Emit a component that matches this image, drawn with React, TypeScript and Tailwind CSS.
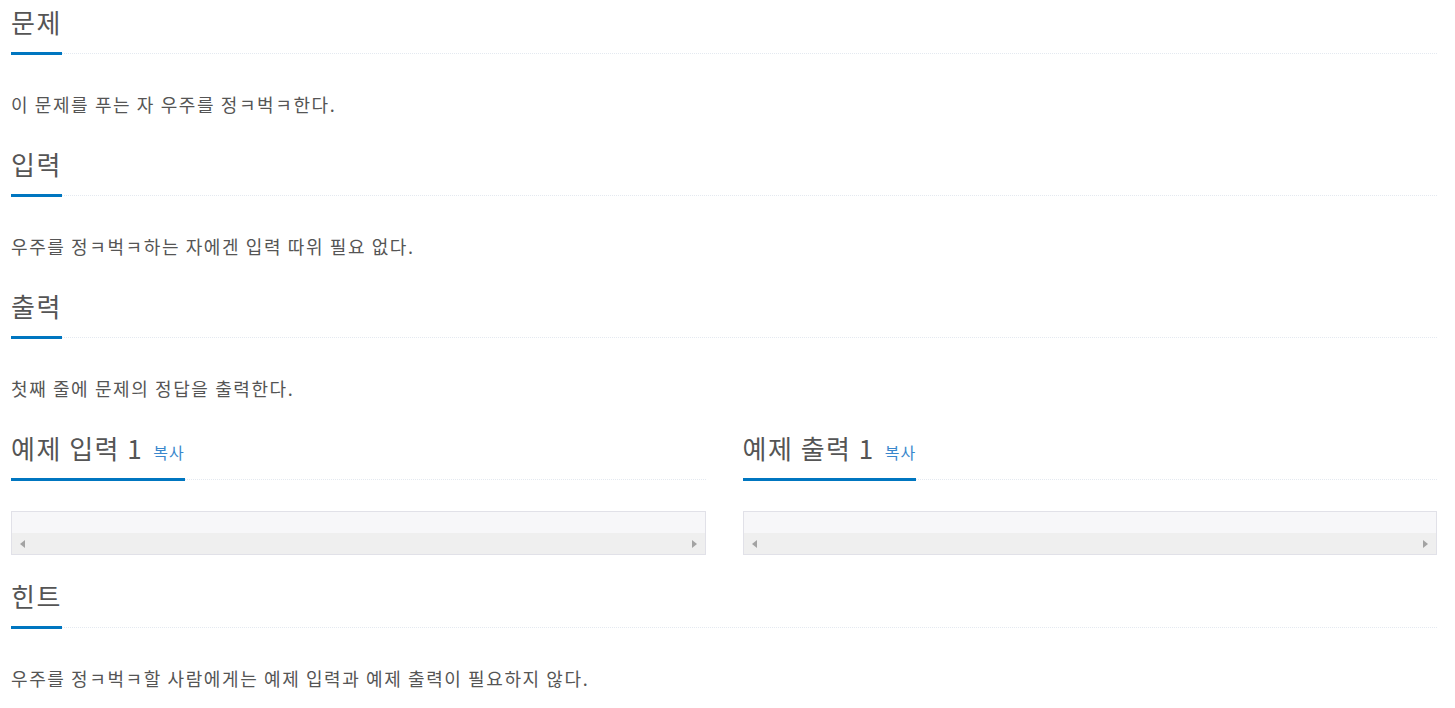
const font = { fontFamily: '"Noto Sans CJK KR", "Noto Sans", sans-serif' }

function Headline({ title, copy }: { title: string; copy?: boolean }) {
  return (
    <div className="border-b border-dotted border-[#e4e9f0]">
      <h2 className="inline-block -mb-[2px] pt-[2px] pb-[11px] border-b-[3px] border-[#0076c0] text-[26px] leading-[39px] tracking-[1.5px] font-normal text-[#555]">
        {title}
        {copy && <span className="ml-[10px] text-[16px] leading-none tracking-[1px] text-[#3a87cc]">복사</span>}
      </h2>
    </div>
  )
}

function Section({ title, text }: { title: string; text: string }) {
  return (
    <section className="mb-[23px]">
      <Headline title={title} />
      <p className="mt-[35px] text-[18px] leading-[30px] tracking-[1.6px] text-[#555]">{text}</p>
    </section>
  )
}

function SampleBox() {
  return (
    <div className="mt-[31px] border border-[#e1e1e8] bg-[#f7f7f9]">
      <div className="h-[21px]" />
      <div className="h-[21px] bg-[#efefef] flex items-center justify-between px-[8px]">
        <span className="w-0 h-0 border-y-[4px] border-y-transparent border-r-[5px] border-r-[#a3a3a3]" />
        <span className="w-0 h-0 border-y-[4px] border-y-transparent border-l-[5px] border-l-[#a3a3a3]" />
      </div>
    </div>
  )
}

export default function App() {
  return (
    <div className="min-h-screen bg-white pl-[11px] pr-[18px]" style={font}>
      <Section title="문제" text="이 문제를 푸는 자 우주를 정ㅋ벅ㅋ한다." />
      <Section title="입력" text="우주를 정ㅋ벅ㅋ하는 자에겐 입력 따위 필요 없다." />
      <Section title="출력" text="첫째 줄에 문제의 정답을 출력한다." />
      <div className="grid grid-cols-2 gap-x-[37px] mt-[1px] mb-[19px]">
        <section>
          <Headline title="예제 입력 1" copy />
          <SampleBox />
        </section>
        <section>
          <Headline title="예제 출력 1" copy />
          <SampleBox />
        </section>
      </div>
      <Section title="힌트" text="우주를 정ㅋ벅ㅋ할 사람에게는 예제 입력과 예제 출력이 필요하지 않다." />
    </div>
  )
}
